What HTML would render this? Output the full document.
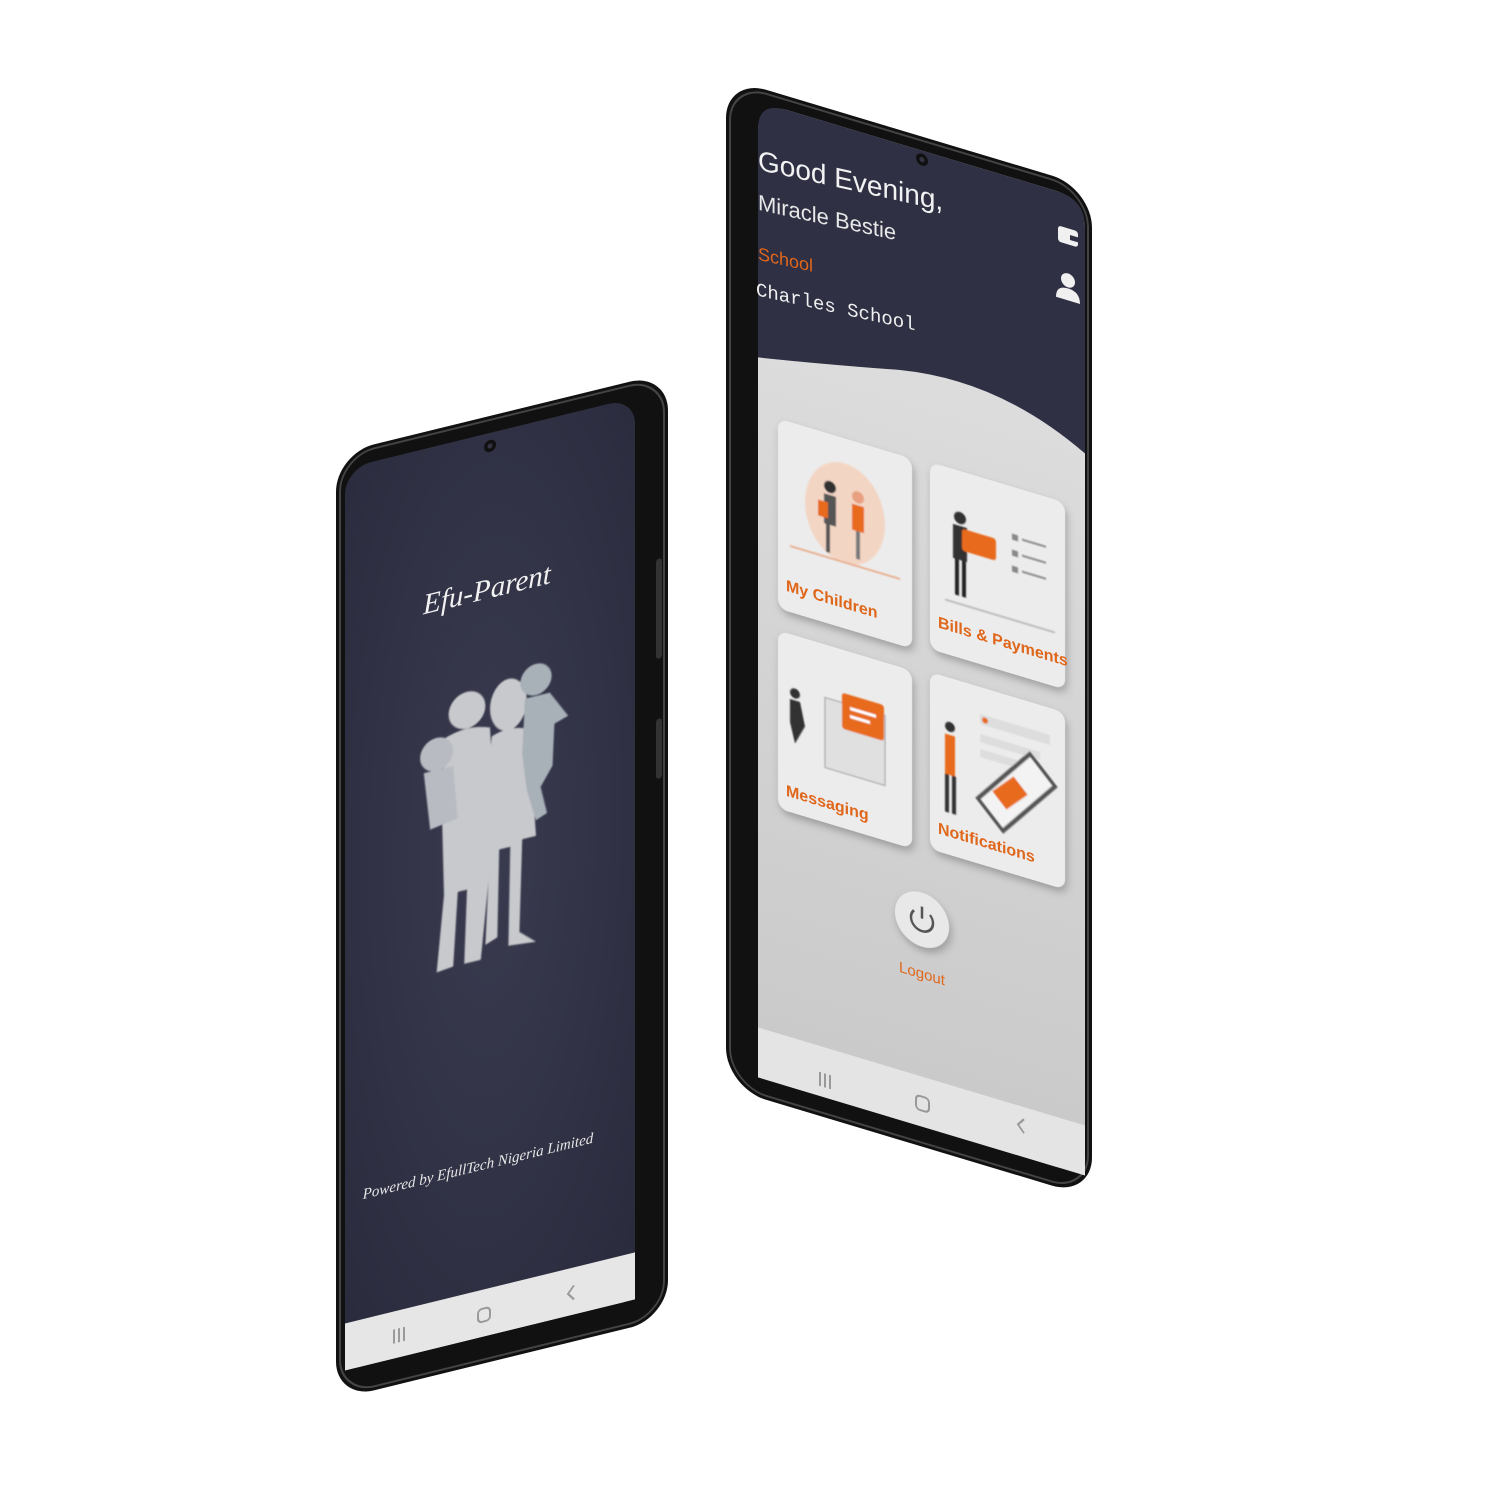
<!DOCTYPE html>
<html><head><meta charset="utf-8"><style>
html,body{margin:0;padding:0;background:#fff;width:1500px;height:1500px;overflow:hidden}
svg{display:block}
</style></head><body>
<svg width="1500" height="1500" viewBox="0 0 1500 1500" xmlns="http://www.w3.org/2000/svg">
<defs>
<radialGradient id="lg" cx="0.5" cy="0.45" r="0.7"><stop offset="0" stop-color="#3a3b50"/><stop offset="1" stop-color="#2a2b3d"/></radialGradient>
<linearGradient id="rg" x1="0" y1="0" x2="0" y2="1"><stop offset="0" stop-color="#e2e2e2"/><stop offset="1" stop-color="#c9c9c9"/></linearGradient>
<filter id="bl"><feGaussianBlur stdDeviation="0.8"/></filter>
<filter id="sh" x="-20%" y="-20%" width="140%" height="140%"><feDropShadow dx="2" dy="4" stdDeviation="4" flood-opacity="0.25"/></filter>
</defs>

<!-- LEFT PHONE -->
<g transform="matrix(1,-0.245,0,1,0,0)">
  <rect x="336" y="536" width="332" height="946" rx="38" fill="#111"/>
  <rect x="340" y="540" width="324" height="938" rx="35" fill="none" stroke="#444" stroke-width="2"/>
  <rect x="345" y="553" width="290" height="902" rx="26" fill="url(#lg)"/>
  <rect x="345" y="1408" width="290" height="47" fill="#e6e6e6"/>
  <rect x="345" y="1430" width="290" height="25" rx="12" fill="#e6e6e6"/>
  <circle cx="490" cy="566" r="6" fill="#111"/><circle cx="490" cy="566" r="2.5" fill="#334"/>
  <rect x="656" y="720" width="6" height="100" rx="3" fill="#333"/>
  <rect x="656" y="880" width="6" height="60" rx="3" fill="#333"/>
  <text x="487" y="718" text-anchor="middle" font-family="Liberation Serif, serif" font-style="italic" font-size="29" fill="#f2f2f2">Efu-Parent</text>
  <g fill="#c8c9cc" filter="url(#bl)" transform="translate(490 935) scale(0.92) translate(-490 -935)">
    <circle cx="465" cy="815" r="20"/>
    <path d="M440 840 Q465 830 490 840 L495 930 L488 1010 L480 1090 L462 1090 L465 1010 L455 1010 L450 1090 L432 1092 L440 1010 L438 930Z"/>
    <circle cx="432" cy="855" r="18" fill="#b8bcc2"/>
    <path d="M418 872 L450 872 L455 930 L425 935Z" fill="#b8bcc2"/>
    <ellipse cx="510" cy="820" rx="20" ry="28"/>
    <path d="M492 850 Q512 842 532 852 L540 970 L525 970 L522 1070 L540 1085 L510 1082 L512 975 L500 975 L498 1070 L485 1075 L490 970 L480 965Z"/>
    <circle cx="540" cy="800" r="17" fill="#a8b0b8"/>
    <path d="M528 818 L555 818 L575 848 L560 853 L558 898 L545 918 L552 948 L540 953 L530 918 L525 878Z" fill="#a8b0b8"/>
  </g>
  <text x="478" y="1288" text-anchor="middle" font-family="Liberation Serif, serif" font-style="italic" font-size="15" fill="#e8e8e8">Powered by EfullTech Nigeria Limited</text>
  <g fill="none" stroke="#9a9a9a" stroke-width="2">
    <path d="M394 1426v14M399 1426v14M404 1426v14"/>
    <rect x="478" y="1427" width="12" height="13" rx="4"/>
    <path d="M574 1426 l-6 7 6 7"/>
  </g>
</g>

<!-- RIGHT PHONE -->
<g transform="matrix(1,0.3,0,1,0,0)">
  <rect x="726" y="-140" width="366" height="1010" rx="40" fill="#111"/>
  <rect x="730" y="-136" width="358" height="1002" rx="37" fill="none" stroke="#444" stroke-width="2"/>
  <rect x="758" y="-126" width="327" height="976" rx="28" fill="url(#rg)"/>
  <path d="M758 -98 Q758 -126 786 -126 L1057 -126 Q1085 -126 1085 -98 L1085 128 Q1000 80 900 100 Q820 118 758 130Z" fill="#2f3044"/>
  <rect x="758" y="800" width="327" height="50" fill="#e4e4e4"/>
  <circle cx="922" cy="-117" r="6" fill="#111"/><circle cx="922" cy="-117" r="2.5" fill="#334"/>
  <g transform="matrix(1,-0.08,0,1,0,61)">
  <text x="758" y="-58" font-family="Liberation Sans, sans-serif" font-size="28" fill="#f2f2f2">Good Evening,</text>
  <text x="758" y="-18" font-family="Liberation Sans, sans-serif" font-size="22" fill="#e8e8e8">Miracle Bestie</text>
  <text x="758" y="32" font-family="Liberation Sans, sans-serif" font-size="18" fill="#e0661a">School</text>
  <text x="756" y="68" font-family="Liberation Mono, monospace" font-size="19" fill="#f0f0f0">Charles School</text>
  </g>
  <rect x="1058" y="-92" width="20" height="16" rx="3" fill="#f0f0f0"/><rect x="1070" y="-86" width="8" height="5" fill="#2f3044"/>
  <circle cx="1068" cy="-40" r="7" fill="#f0f0f0"/><path d="M1056 -20 Q1056 -32 1068 -32 Q1080 -32 1080 -20Z" fill="#f0f0f0"/>

  <g filter="url(#sh)">
    <rect x="778" y="185" width="134" height="190" rx="10" fill="#ececec"/>
    <rect x="930" y="183" width="135" height="187" rx="10" fill="#ececec"/>
    <rect x="778" y="397" width="134" height="178" rx="10" fill="#ececec"/>
    <rect x="930" y="393" width="135" height="177" rx="10" fill="#ececec"/>
  </g>
  <g filter="url(#bl)">
    <ellipse cx="845" cy="260" rx="40" ry="50" fill="#f3d5c4"/>
    <circle cx="830" cy="238" r="6" fill="#333"/><rect x="824" y="246" width="12" height="30" fill="#555"/><rect x="818" y="254" width="10" height="16" fill="#e86a1a"/><rect x="826" y="276" width="4" height="28" fill="#555"/>
    <circle cx="858" cy="240" r="6" fill="#e8a080"/><rect x="852" y="248" width="12" height="26" fill="#e86a1a"/><rect x="856" y="274" width="4" height="28" fill="#777"/>
    <rect x="790" y="308" width="110" height="2" fill="#e8b090"/>
    <circle cx="960" cy="230" r="6" fill="#333"/><rect x="953" y="238" width="14" height="34" fill="#333"/><rect x="955" y="272" width="4" height="36" fill="#222"/><rect x="962" y="272" width="4" height="36" fill="#222"/>
    <rect x="962" y="240" width="34" height="22" rx="3" fill="#e86a1a"/>
    <g fill="#888"><rect x="1012" y="230" width="6" height="6"/><rect x="1022" y="232" width="24" height="2"/><rect x="1012" y="246" width="6" height="6"/><rect x="1022" y="248" width="24" height="2"/><rect x="1012" y="262" width="6" height="6"/><rect x="1022" y="264" width="24" height="2"/></g>
    <rect x="945" y="315" width="110" height="2" fill="#bbb"/>
    <circle cx="795" cy="455" r="5" fill="#333"/><path d="M790 462 L800 462 L805 485 L795 505 L790 485Z" fill="#333"/>
    <rect x="825" y="450" width="60" height="70" fill="#e0e0e0" stroke="#999"/>
    <rect x="842" y="440" width="42" height="36" rx="3" fill="#e86a1a"/><rect x="850" y="452" width="26" height="3" fill="#fff"/><rect x="850" y="460" width="20" height="3" fill="#fff"/>
    <rect x="945" y="450" width="10" height="40" fill="#e86a1a"/><circle cx="950" cy="442" r="5" fill="#333"/><rect x="945" y="490" width="4" height="38" fill="#333"/><rect x="952" y="490" width="4" height="38" fill="#333"/>
    <rect x="980" y="420" width="70" height="10" fill="#ddd"/><circle cx="985" cy="425" r="3" fill="#e86a1a"/>
    <rect x="980" y="440" width="60" height="8" fill="#ddd"/><rect x="980" y="455" width="60" height="8" fill="#ddd"/>
    <path d="M978 505 L1030 445 L1055 470 L1003 530Z" fill="#f3f3f3" stroke="#555" stroke-width="4"/>
    <rect x="995" y="480" width="30" height="20" fill="#e86a1a" transform="rotate(-45 1010 490)"/>
  </g>
  <g font-family="Liberation Sans, sans-serif" font-weight="bold" font-size="16" fill="#e0661a">
    <text x="786" y="355">My Children</text>
    <text x="938" y="346">Bills &amp; Payments</text>
    <text x="786" y="560">Messaging</text>
    <text x="938" y="552">Notifications</text>
  </g>
  <circle cx="922" cy="643" r="27" fill="#e8e8e8" filter="url(#sh)"/>
  <path d="M914 636 A11 11 0 1 0 930 636" fill="none" stroke="#555" stroke-width="2.5"/>
  <path d="M922 630 v12" stroke="#555" stroke-width="2.5"/>
  <text x="922" y="702" text-anchor="middle" font-family="Liberation Sans, sans-serif" font-size="15" fill="#e0661a">Logout</text>
  <g fill="none" stroke="#999" stroke-width="2">
    <path d="M820 826v14M825 826v14M830 826v14"/>
    <rect x="916" y="820" width="13" height="14" rx="4"/>
    <path d="M1024 812 l-6 7 6 7"/>
  </g>
</g>
</svg>
</body></html>
